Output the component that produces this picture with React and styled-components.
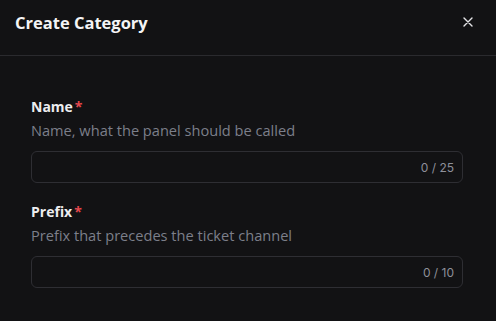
import React from 'react';
import styled, { createGlobalStyle } from 'styled-components';

const GlobalStyle = createGlobalStyle`
  html, body {
    margin: 0;
    padding: 0;
    background: #121214;
  }
  body {
    font-family: 'Open Sans', 'Liberation Sans', sans-serif;
  }
`;

const Modal = styled.div`
  width: 496px;
  height: 321px;
  background: #121214;
  color: #fff;
  display: flex;
  flex-direction: column;
`;

const Header = styled.div`
  height: 56px;
  box-sizing: border-box;
  padding: 0 22px 0 15px;
  display: flex;
  align-items: center;
  justify-content: space-between;
  border-bottom: 1px solid #2a2a2e;
`;

const Title = styled.h2`
  margin: 0;
  margin-top: -10px;
  font-size: 16.5px;
  font-weight: 700;
  color: #f4f4f5;
`;

const Close = styled.button`
  background: none;
  border: none;
  padding: 0;
  margin-top: -12px;
  width: 12px;
  height: 12px;
  display: flex;
  align-items: center;
  justify-content: center;
  color: #e4e4e7;
  cursor: pointer;
`;

const Body = styled.div`
  padding: 41px 33px 0 31px;
  display: flex;
  flex-direction: column;
  gap: 19px;
`;

const Field = styled.div`
  display: flex;
  flex-direction: column;
`;

const Label = styled.label`
  font-size: 14px;
  font-weight: 700;
  color: #ededef;
  line-height: 20px;
`;

const Required = styled.span`
  color: #e5484d;
  margin-left: 2px;
`;

const Hint = styled.div`
  font-size: 14.6px;
  color: #7c7f8a;
  line-height: 20px;
  margin-top: 3px;
`;

const InputBox = styled.div`
  margin-top: 11px;
  height: 32px;
  box-sizing: border-box;
  border: 1px solid #2e2e33;
  border-radius: 6px;
  display: flex;
  align-items: center;
  padding: 0 8px 0 10px;
`;

const Input = styled.input`
  flex: 1;
  min-width: 0;
  background: transparent;
  border: none;
  outline: none;
  color: #fff;
  font: inherit;
  font-size: 13px;
`;

const Counter = styled.span`
  font-family: 'Inter', 'Liberation Sans', sans-serif;
  font-size: 12px;
  color: #8e909a;
`;

function TextField ({ label, hint, max }) {
  return (
    <Field>
      <Label>{label}<Required>*</Required></Label>
      <Hint>{hint}</Hint>
      <InputBox>
        <Input />
        <Counter>0 / {max}</Counter>
      </InputBox>
    </Field>
  );
}

export default function App () {
  return (
    <>
      <GlobalStyle />
      <Modal>
        <Header>
          <Title>Create Category</Title>
          <Close aria-label='Close'>
            <svg width='10' height='10' viewBox='0 0 10 10' fill='none' stroke='currentColor' strokeWidth='1.4' strokeLinecap='round'>
              <path d='M1 1L9 9M9 1L1 9' />
            </svg>
          </Close>
        </Header>
        <Body>
          <TextField label='Name' hint='Name, what the panel should be called' max={25} />
          <TextField label='Prefix' hint='Prefix that precedes the ticket channel' max={10} />
        </Body>
      </Modal>
    </>
  );
}
